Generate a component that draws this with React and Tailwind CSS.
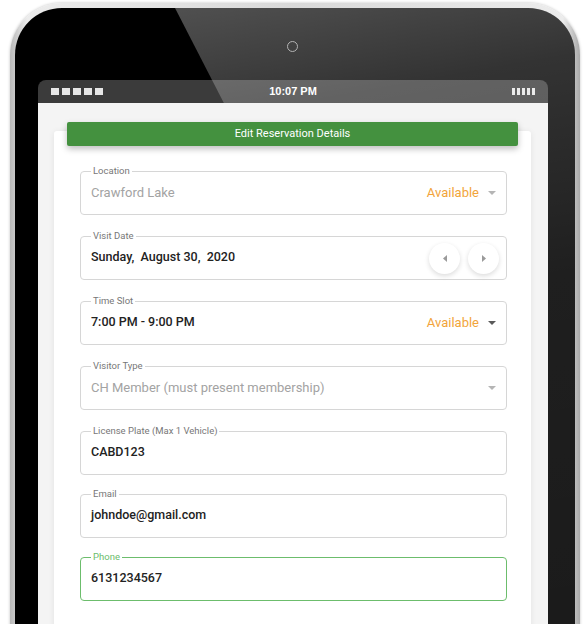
import React from 'react';

const roboto = { fontFamily: 'Roboto, "Noto Sans", sans-serif' };

function Caret({ dark }) {
  return (
    <svg width="8" height="4" viewBox="0 0 8 4" className={dark ? 'fill-[#5a5a5a]' : 'fill-[#b5b5b5]'}>
      <path d="M0 0h8L4 4z" />
    </svg>
  );
}

function Available({ dark }) {
  return (
    <div className="flex items-center gap-[9px]">
      <span className="text-[13px] text-[#f2a43a]">Available</span>
      <Caret dark={dark} />
    </div>
  );
}

function NavButton({ dir }) {
  return (
    <button className="w-[31px] h-[31px] rounded-full bg-white shadow-[0_2px_5px_rgba(0,0,0,0.14)] flex items-center justify-center">
      <svg width="4" height="7" viewBox="0 0 4 7" className="fill-[#9a9a9a]">
        {dir === 'left' ? <path d="M4 0v7L0 3.5z" /> : <path d="M0 0v7l4-3.5z" />}
      </svg>
    </button>
  );
}

// campo con borde "outlined" y etiqueta sobre la línea
function Campo({ label, children, activo, className = '' }) {
  return (
    <fieldset
      className={`rounded-[4px] pl-[10px] pr-[10px] ${
        activo ? 'border-[1.5px] border-[#6cbd6c]' : 'border border-[#d6d6d6]'
      } ${className}`}
    >
      <legend className={`px-[2px] text-[9.5px] leading-[12px] ${activo ? 'text-[#6cbd6c]' : 'text-[#777]'}`}>
        {label}
      </legend>
      <div className="h-[37px] pb-[6px] flex items-center justify-between">{children}</div>
    </fieldset>
  );
}

const valor = 'text-[12.5px] font-medium text-[#222]';

export default function App() {
  return (
    <div className="w-[583px] h-[624px] bg-white overflow-hidden pl-[10px] pt-[3px]">
      {/* marco plateado */}
      <div className="w-[570px] h-[720px] rounded-[52px] p-[5px] bg-[linear-gradient(90deg,#b9b9b9,#ececec_3%,#d9d9d9_50%,#ececec_97%,#a9a9a9)] shadow-[0_0_3px_rgba(0,0,0,0.25)]">
        {/* bisel */}
        <div className="relative h-full rounded-[47px] bg-black overflow-hidden pl-[23px] pt-[72px]">
          {/* cámara */}
          <div className="absolute left-[272px] top-[33px] w-[11px] h-[11px] rounded-full border border-[#9a9a9a]" />

          {/* reflejo del vidrio */}
          <div className="absolute inset-0 z-10 pointer-events-none [clip-path:polygon(160px_0,100%_0,100%_100%,525px_100%)] bg-[linear-gradient(170deg,rgba(255,255,255,0.34)_0%,rgba(255,255,255,0.2)_18%,rgba(255,255,255,0.12)_45%,rgba(255,255,255,0.1)_100%)]" />

          <div className="w-[510px]">
            {/* barra de estado */}
            <div className="h-[23px] rounded-t-[8px] bg-[#3b3b3b] grid grid-cols-[1fr_auto_1fr] items-center px-[13px]">
              <div className="flex gap-[3px]">
                {[0, 1, 2, 3, 4].map((i) => (
                  <div key={i} className="w-[8px] h-[7px] bg-[#e6e6e6]" />
                ))}
              </div>
              <span className="relative z-20 text-white text-[11px] font-bold" style={{ fontFamily: '"Liberation Sans", Arial, sans-serif' }}>
                10:07 PM
              </span>
              <div className="flex gap-[2px] justify-end">
                {[0, 1, 2, 3, 4].map((i) => (
                  <div key={i} className="w-[3px] h-[7px] bg-[#e6e6e6]" />
                ))}
              </div>
            </div>

            {/* pantalla */}
            <div className="relative z-20 h-[560px] bg-[#f4f4f4] pt-[19px] pl-[16px] pr-[17px]" style={roboto}>
              <div className="relative z-10 mx-[13px] h-[24px] rounded-[2px] bg-[#44913f] shadow-[0_3px_6px_rgba(0,0,0,0.25)] flex items-center justify-center">
                <span className="text-white text-[11px]">Edit Reservation Details</span>
              </div>

              <div className="-mt-[15px] bg-white rounded-[3px] shadow-[0_1px_6px_rgba(0,0,0,0.08)] pt-[34px] pl-[26px] pr-[24px] pb-[60px] flex flex-col">
                <Campo label="Location">
                  <span className="text-[13px] text-[#a3a3a3]">Crawford Lake</span>
                  <Available />
                </Campo>

                <Campo label="Visit Date" className="mt-[15px]">
                  <span className={`${valor} whitespace-pre`}>Sunday,  August 30,  2020</span>
                  <div className="flex gap-[8px] -mr-[3px] mt-[2px]">
                    <NavButton dir="left" />
                    <NavButton dir="right" />
                  </div>
                </Campo>

                <Campo label="Time Slot" className="mt-[15px]">
                  <span className={valor}>7:00 PM - 9:00 PM</span>
                  <Available dark />
                </Campo>

                <Campo label="Visitor Type" className="mt-[15px]">
                  <span className="text-[13px] text-[#a3a3a3]">CH Member (must present membership)</span>
                  <Caret />
                </Campo>

                <Campo label="License Plate (Max 1 Vehicle)" className="mt-[15px]">
                  <span className={valor}>CABD123</span>
                </Campo>

                <Campo label="Email" className="mt-[13px]">
                  <span className={valor}>johndoe@gmail.com</span>
                </Campo>

                <Campo label="Phone" activo className="mt-[13px]">
                  <span className={valor}>6131234567</span>
                </Campo>
              </div>
            </div>
          </div>
        </div>
      </div>
    </div>
  );
}
